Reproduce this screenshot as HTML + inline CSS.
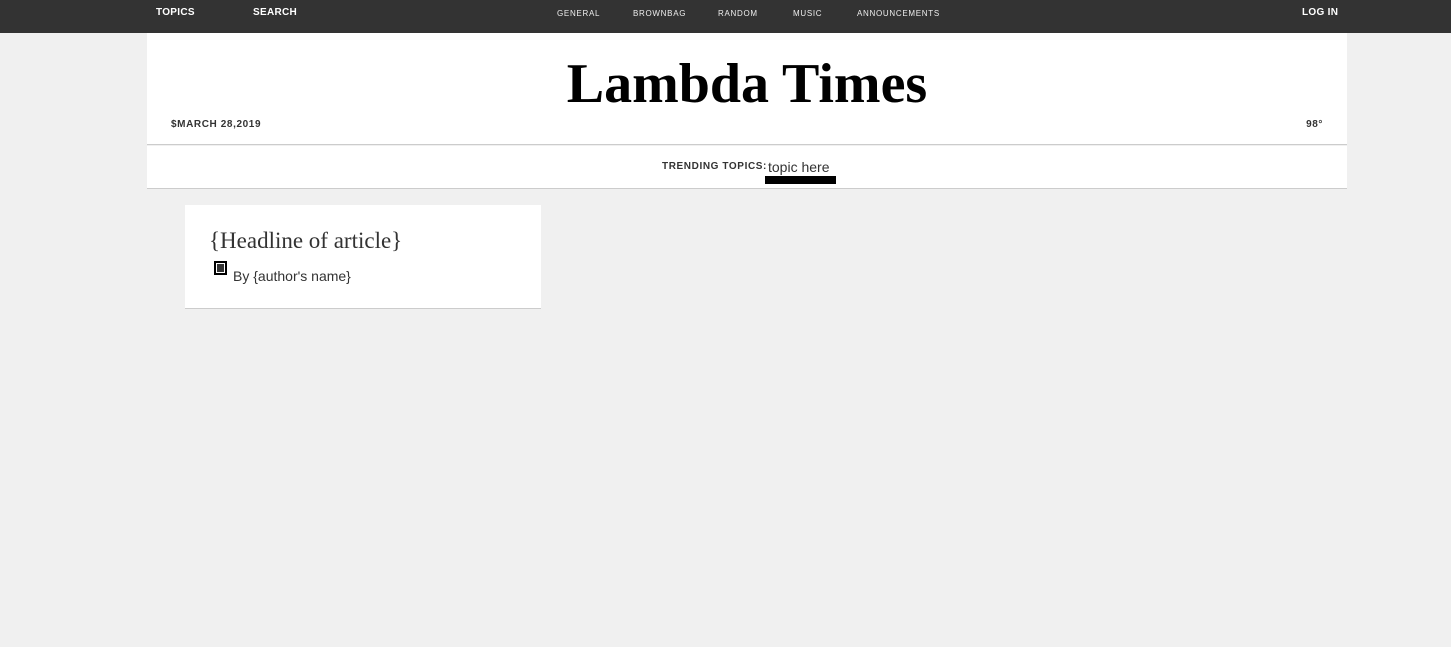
<!DOCTYPE html>
<html><head><style>
*{margin:0;padding:0;box-sizing:border-box}
body{width:1451px;height:647px;background:#f0f0f0;font-family:"Liberation Sans",sans-serif;position:relative;overflow:hidden}
.nav{position:absolute;left:0;top:0;width:1451px;height:33px;background:#333}
.nav span{position:absolute;color:#fff;font-weight:bold;top:7px;font-size:10px;letter-spacing:0.3px}
.nav .s{font-size:8px;top:9px;letter-spacing:0.7px;font-weight:normal;color:#eee}
.hdr{position:absolute;left:147px;top:33px;width:1200px;height:112px;background:#fff;border-bottom:1px solid #ccc}
.title{position:absolute;left:0;width:1200px;top:21px;text-align:center;font-family:"Liberation Serif",serif;font-weight:bold;font-size:56px;line-height:60px;color:#000}
.date{position:absolute;left:24px;top:86px;font-size:10px;font-weight:bold;letter-spacing:0.6px;color:#333}
.temp{position:absolute;right:24px;top:86px;font-size:10px;font-weight:bold;letter-spacing:0.6px;color:#333}
.trend{position:absolute;left:147px;top:146px;width:1200px;height:43px;background:#fff;border-bottom:1px solid #ccc}
.tt{position:absolute;left:515px;top:15px;font-size:10px;font-weight:bold;letter-spacing:0.6px;color:#333}
.th{position:absolute;left:621px;top:13px;font-size:14px;color:#333}
.bar{position:absolute;left:618px;top:30px;width:71px;height:8px;background:#000}
.card{position:absolute;left:185px;top:205px;width:356px;height:104px;background:#fff;border-bottom:1px solid #ccc}
.hl{position:absolute;left:24px;top:23px;font-family:"Liberation Serif",serif;font-size:23px;color:#333}
.ic{position:absolute;left:29px;top:56px;width:13px;height:14px;border:2px solid #000;background:#fff}
.ic:after{content:"";position:absolute;left:1px;top:1px;width:7px;height:8px;background:#333}
.by{position:absolute;left:48px;top:63px;font-size:14px;color:#333}
</style></head><body>
<div class="nav">
<span style="left:156px">TOPICS</span><span style="left:253px">SEARCH</span>
<span class="s" style="left:557px">GENERAL</span><span class="s" style="left:633px">BROWNBAG</span>
<span class="s" style="left:718px">RANDOM</span><span class="s" style="left:793px">MUSIC</span>
<span class="s" style="left:857px">ANNOUNCEMENTS</span>
<span style="left:1302px">LOG IN</span>
</div>
<div class="hdr"><div class="title">Lambda Times</div><div class="date">$MARCH 28,2019</div><div class="temp">98°</div></div>
<div class="trend"><div class="tt">TRENDING TOPICS:</div><div class="th">topic here</div><div class="bar"></div></div>
<div class="card"><div class="hl">{Headline of article}</div><div class="ic"></div><div class="by">By {author's name}</div></div>
</body></html>
